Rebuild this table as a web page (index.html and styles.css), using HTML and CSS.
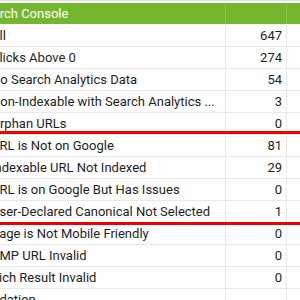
FILE: index.html
```html
<!DOCTYPE html>
<html>
<head>
<meta charset="utf-8">
<link rel="stylesheet" href="styles.css">
</head>
<body>
<div class="viewport">
  <div class="table">
    <div class="row head"><div class="cell name">Search Console</div><div class="cell num"></div><div class="cell rest"></div></div>
    <div class="row"><div class="cell name sub">All</div><div class="cell num">647</div><div class="cell rest"></div></div>
    <div class="row"><div class="cell name sub">Clicks Above 0</div><div class="cell num">274</div><div class="cell rest"></div></div>
    <div class="row"><div class="cell name sub">No Search Analytics Data</div><div class="cell num">54</div><div class="cell rest"></div></div>
    <div class="row"><div class="cell name sub">Non-Indexable with Search Analytics ...</div><div class="cell num">3</div><div class="cell rest"></div></div>
    <div class="row"><div class="cell name sub">Orphan URLs</div><div class="cell num">0</div><div class="cell rest"></div></div>
    <div class="row"><div class="cell name sub">URL is Not on Google</div><div class="cell num">81</div><div class="cell rest"></div></div>
    <div class="row"><div class="cell name sub">Indexable URL Not Indexed</div><div class="cell num">29</div><div class="cell rest"></div></div>
    <div class="row"><div class="cell name sub">URL is on Google But Has Issues</div><div class="cell num">0</div><div class="cell rest"></div></div>
    <div class="row"><div class="cell name sub">User-Declared Canonical Not Selected</div><div class="cell num">1</div><div class="cell rest"></div></div>
    <div class="row"><div class="cell name sub">Page is Not Mobile Friendly</div><div class="cell num">0</div><div class="cell rest"></div></div>
    <div class="row"><div class="cell name sub">AMP URL Invalid</div><div class="cell num">0</div><div class="cell rest"></div></div>
    <div class="row"><div class="cell name sub">Rich Result Invalid</div><div class="cell num">0</div><div class="cell rest"></div></div>
    <div class="row"><div class="cell name">Validation</div><div class="cell num"></div><div class="cell rest"></div></div>
  </div>
  <div class="mark mark-1"></div>
  <div class="mark mark-2"></div>
</div>
</body>
</html>
```
FILE: styles.css
```css
html, body {
  margin: 0;
  padding: 0;
  background: #fff;
}
.viewport {
  position: relative;
  width: 300px;
  height: 300px;
  overflow: hidden;
  border-top: 1px solid #dcdcdc;
  box-sizing: border-box;
  padding-top: 2px;
}
.table {
  margin-left: -30px;
  font-family: Roboto, "Liberation Sans", sans-serif;
  font-size: 13px;
  color: #1e1e1e;
}
.row {
  display: grid;
  grid-template-columns: 256px 61px 40px;
  height: 22px;
  border-bottom: 1px solid #e8e8e8;
  box-sizing: border-box;
}
.cell {
  display: flex;
  align-items: center;
  white-space: nowrap;
  overflow: hidden;
  border-right: 1px solid #e8e8e8;
}
.name {
  padding-left: 8px;
}
.name.sub {
  padding-left: 21px;
}
.num {
  justify-content: flex-end;
  padding-right: 4px;
}
.head {
  background: #74b72e;
  color: #fff;
  height: 22px;
  border-bottom: 1px solid #fff;
}
.head .cell {
  border-right: 1px solid #8cc552;
}
.mark {
  position: absolute;
  left: 0;
  width: 300px;
  height: 3px;
  background: #ee0000;
}
.mark-1 { top: 130px; }
.mark-2 { top: 221px; }
```
